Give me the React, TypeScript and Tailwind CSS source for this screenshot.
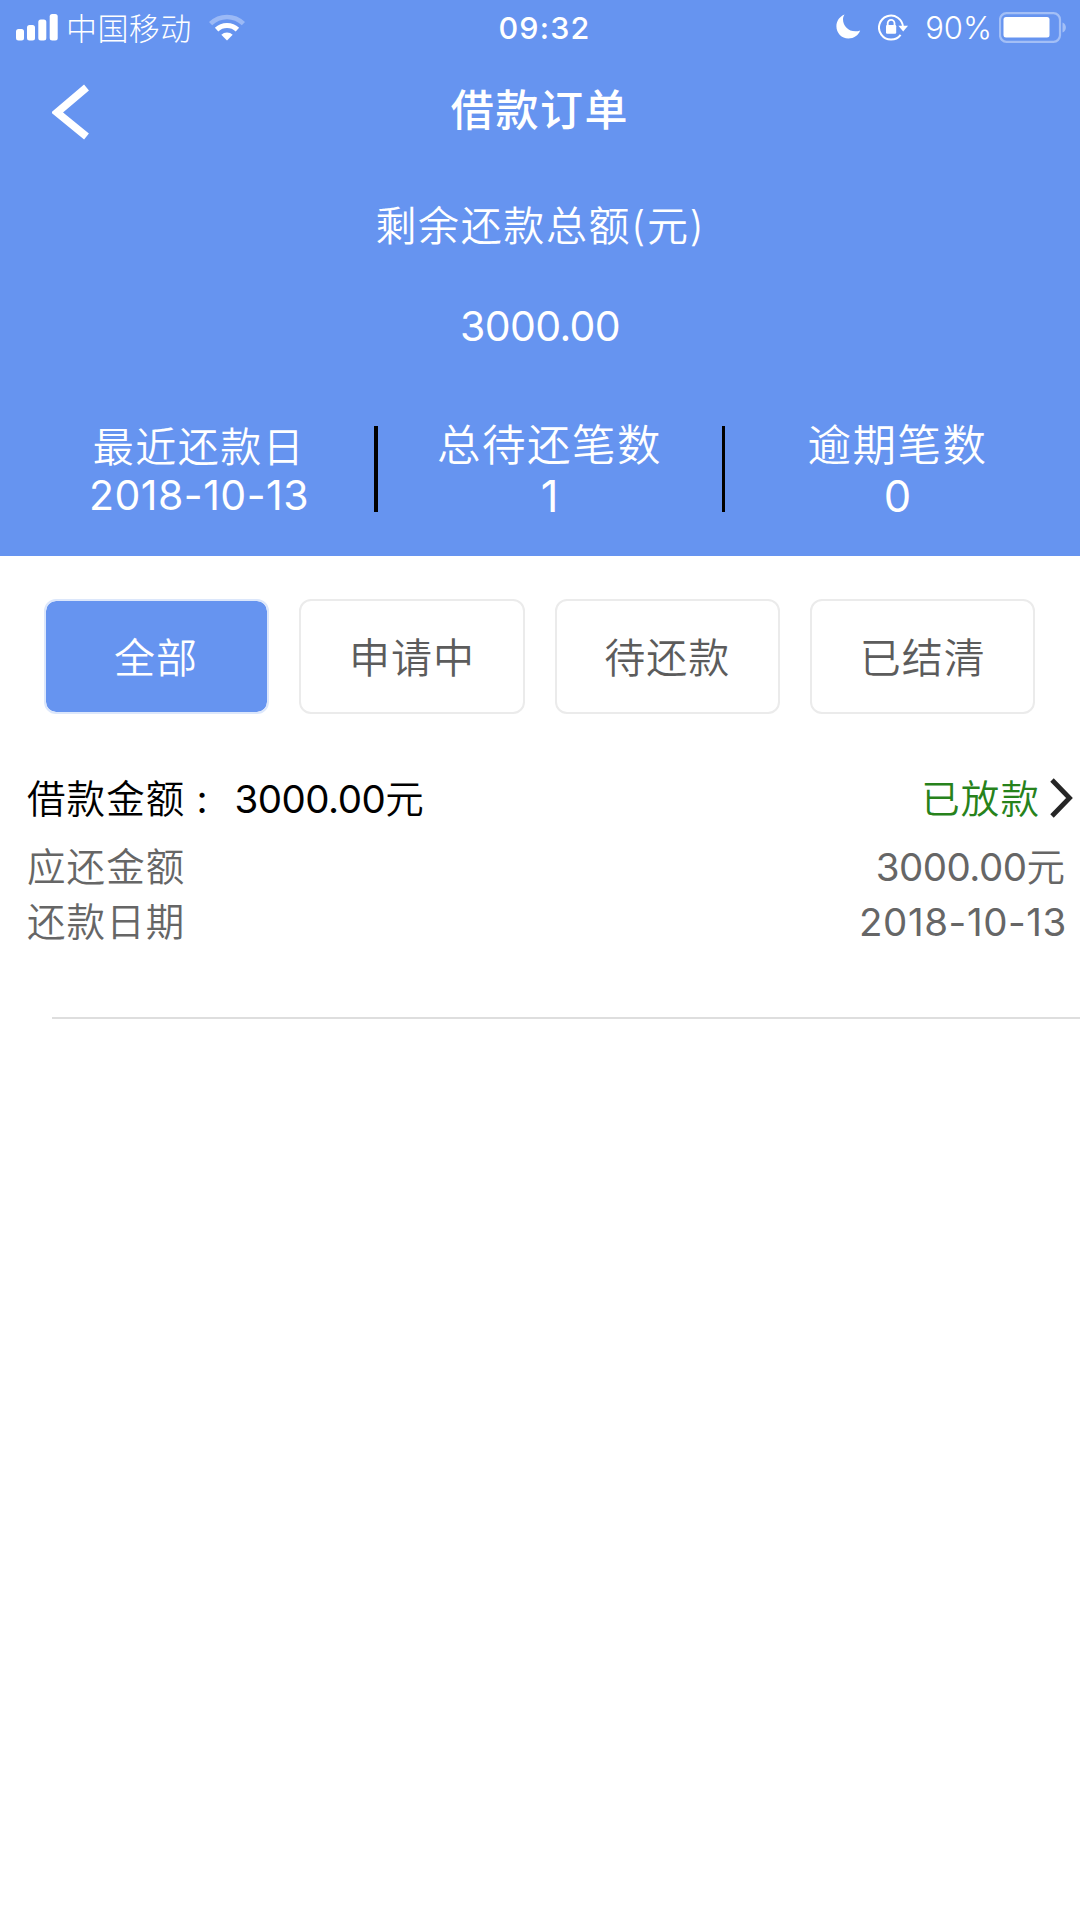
import React from "react";

const stats = [
  { label: "最近还款日", value: "2018-10-13" },
  { label: "总待还笔数", value: "1" },
  { label: "逾期笔数", value: "0" },
];

const tabs = ["全部", "申请中", "待还款", "已结清"];

function SignalIcon() {
  return (
    <svg width="42" height="27" viewBox="0 0 42 27" fill="#fff">
      <rect x="0" y="15" width="8" height="11.5" rx="2.5" />
      <rect x="11" y="11" width="8" height="15.5" rx="2.5" />
      <rect x="22.3" y="5.5" width="8" height="21" rx="2.5" />
      <rect x="33.7" y="0" width="8" height="26.5" rx="2.5" />
    </svg>
  );
}

function WifiIcon() {
  return (
    <svg width="36" height="27" viewBox="0 0 36 27" fill="none">
      <path d="M1.6 9.6 A23.5 23.5 0 0 1 34.4 9.6" stroke="#9bb9f6" strokeWidth="4.6" />
      <path d="M7.6 15.6 A15 15 0 0 1 28.4 15.6" stroke="#fff" strokeWidth="5" />
      <path d="M18 26.5 L12.3 20.8 A8.2 8.2 0 0 1 23.7 20.8 Z" fill="#fff" />
    </svg>
  );
}

function MoonIcon() {
  return (
    <svg width="25" height="25" viewBox="0 0 25 25" fill="#fff">
      <path d="M8.6 0.4 C3.6 2.4 0.4 6.8 0.4 12.2 C0.4 19 5.6 24.4 12.4 24.4 C17.8 24.4 22.4 21.2 24.2 16.4 C22.6 17 21 17.3 19.4 17.3 C12.4 17.3 7 12 7 5.2 C7 3.5 7.6 1.8 8.6 0.4 Z" />
    </svg>
  );
}

function RotationLockIcon() {
  return (
    <svg width="31" height="27" viewBox="0 0 31 27" fill="none">
      <path d="M22.6 20.8 A12 12 0 1 1 25 13.2" stroke="#fff" strokeWidth="2" />
      <path d="M20.4 11.8 H30 L25.2 17.6 Z" fill="#fff" />
      <path d="M9.7 12 V9.2 A3.4 3.4 0 0 1 16.5 9.2 V12" stroke="#fff" strokeWidth="1.8" />
      <rect x="8" y="11" width="10.2" height="8.8" rx="1.2" fill="#fff" />
    </svg>
  );
}

function BatteryIcon() {
  return (
    <svg width="68" height="31" viewBox="0 0 68 31" fill="none">
      <rect x="1" y="1.2" width="60" height="28.6" rx="6.5" stroke="#a3bff6" strokeWidth="2.2" />
      <rect x="4.5" y="5" width="46" height="20.5" rx="2.5" fill="#fff" />
      <path d="M63.5 10.5 C68 12 68 19 63.5 20.5 Z" fill="#a3bff6" />
    </svg>
  );
}

function StatusBar() {
  return (
    <div className="grid h-[54px] grid-cols-3 items-center">
      <div className="flex items-center pl-4">
        <SignalIcon />
        <span className="ml-[8px] pt-[2px] text-[31px] leading-[52px] font-light tracking-[0.4px]">中国移动</span>
        <span className="-mt-px ml-[17px]"><WifiIcon /></span>
      </div>
      <div className="pl-[9px] text-center text-[30.5px] leading-[54px] font-medium tracking-[1.2px]">09:32</div>
      <div className="flex items-center justify-end pr-[13px]">
        <span className="-mt-[3px]"><MoonIcon /></span>
        <span className="-mt-px ml-[17px]"><RotationLockIcon /></span>
        <span className="ml-[16px] pt-px text-[31px] leading-[54px] font-[350]">90%</span>
        <span className="-mt-px ml-[7px]"><BatteryIcon /></span>
      </div>
    </div>
  );
}

function Header() {
  return (
    <header className="h-[556px] bg-[#6694f0] text-white">
      <StatusBar />
      <div className="grid h-[110px] grid-cols-3 items-center">
        <button className="pt-[6px] pl-[52px]" aria-label="返回">
          <svg width="39" height="56" viewBox="0 0 39 56" fill="none">
            <path d="M34.5 3.5 L5 28.5 L34.5 52.5" stroke="#fff" strokeWidth="7.6" />
          </svg>
        </button>
        <h1 className="pt-[2px] text-center text-[43px] leading-[108px] font-medium tracking-[1.6px]">借款订单</h1>
      </div>
      <div className="mt-[22px] pl-px text-center text-[41px] leading-[80px] tracking-[1.6px]">剩余还款总额(元)</div>
      <div className="text-center text-[41px] leading-[121px] font-normal tracking-[-0.6px]">3000.00</div>
      <div className="flex pt-[39px]">
        <div className="w-[374px] pl-[24px] text-center text-[41px]">
          <div className="-mt-[4px] leading-[50px] tracking-[1.5px]">{stats[0].label}</div>
          <div className="-mt-[2px] leading-[50px] font-normal tracking-[0.5px]">{stats[0].value}</div>
        </div>
        <div className="h-[86px] w-[3.5px] bg-black" />
        <div className="w-[344px] text-center text-[43.5px]">
          <div className="-mt-[7px] leading-[52px] tracking-[1.5px]">{stats[1].label}</div>
          <div className="-mt-[2px] leading-[54px] font-normal">{stats[1].value}</div>
        </div>
        <div className="h-[86px] w-[3.5px] bg-black" />
        <div className="w-[345px] text-center text-[43.5px]">
          <div className="-mt-[7px] leading-[52px] tracking-[1.5px]">{stats[2].label}</div>
          <div className="-mt-[2px] leading-[54px] font-normal">{stats[2].value}</div>
        </div>
      </div>
    </header>
  );
}

function Tabs() {
  return (
    <nav className="mt-[43px] grid grid-cols-4 gap-[30px] pr-[44.6px] pl-[43.8px]">
      {tabs.map((tab, i) => (
        <button
          key={tab}
          className={
            i === 0
              ? "h-[115px] rounded-[12px] border-2 border-[#dce7fb] bg-[#6694f0] bg-clip-padding pt-[4px] pr-[1px] text-[41px] tracking-[1px] text-white"
              : "h-[115px] rounded-[12px] border-2 border-[#ebebeb] pt-[4px] text-[41px] tracking-[1px] text-[#5c5c5c]"
          }
        >
          {tab}
        </button>
      ))}
    </nav>
  );
}

function Amount({ value }: { value: string }) {
  return (
    <span>
      <span className="font-normal tracking-[-0.5px]">{value}</span>元
    </span>
  );
}

function Order() {
  return (
    <section className="mt-[57px] text-[38.5px] text-[#666]">
      <div className="flex h-[56px] items-center justify-between pr-[7px] pl-[27px]">
        <div className="flex leading-[56px] text-black">
          <span className="tracking-[1.1px]">借款金额</span>
          <span className="w-[49px] pl-[11px] font-normal">:</span>
          <Amount value="3000.00" />
        </div>
        <div className="flex items-center leading-[56px] text-[#27821b]">
          <span className="tracking-[1.1px]">已放款</span>
          <svg className="mb-[2px] ml-[10px]" width="23" height="40" viewBox="0 0 23 40" fill="none">
            <path d="M2 2 L19.5 20 L2 38" stroke="#262626" strokeWidth="4.8" />
          </svg>
        </div>
      </div>
      <div className="mt-[12px] flex justify-between pr-[15px] pl-[27px] leading-[56px]">
        <span className="tracking-[1.1px]">应还金额</span>
        <Amount value="3000.00" />
      </div>
      <div className="flex justify-between pr-[13px] pl-[27px] leading-[55px]">
        <span className="tracking-[1.1px]">还款日期</span>
        <span className="font-normal tracking-[0.6px]">2018-10-13</span>
      </div>
      <div className="mt-[67px] ml-[52px] h-[2px] bg-[#dedede]" />
    </section>
  );
}

export default function App() {
  return (
    <div className="h-[1920px] w-[1080px] overflow-hidden bg-white font-['Inter','Noto_Sans_CJK_SC',sans-serif] font-[350]">
      <Header />
      <Tabs />
      <Order />
    </div>
  );
}
